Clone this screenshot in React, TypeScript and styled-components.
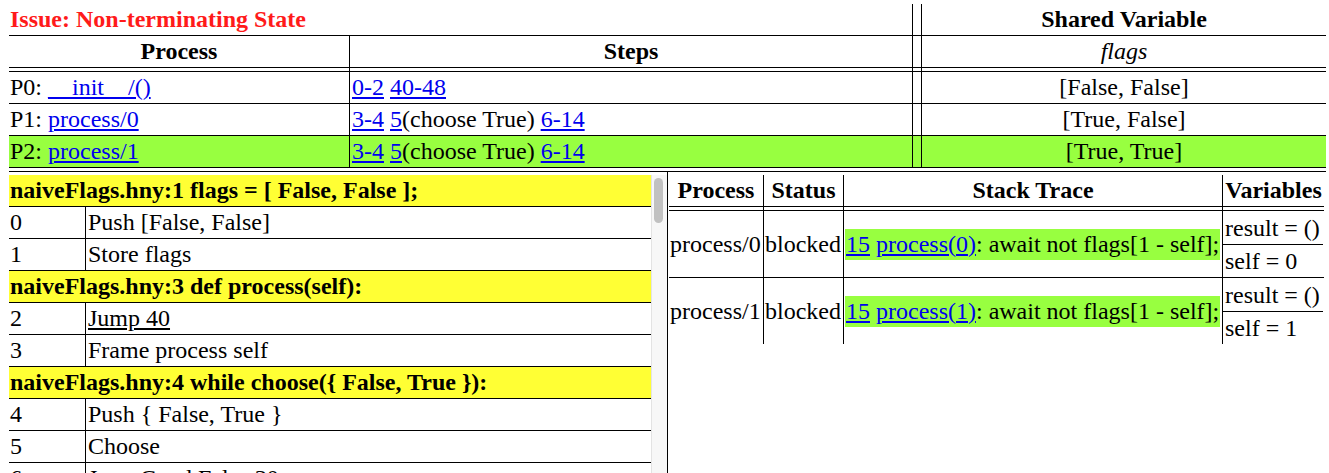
import React from "react";
import styled, { createGlobalStyle } from "styled-components";

const GREEN = "#98ff40";
const YELLOW = "#ffff34";
const LINK = "#0000ee";

const GlobalStyle = createGlobalStyle`
  html, body { margin: 0; padding: 0; overflow: hidden; background: #ffffff; }
  body {
    font-family: "Liberation Serif", "Times New Roman", serif;
    font-size: 24px;
    color: #000000;
  }
`;

const Page = styled.div`
  padding: 4px 0 0 9px;
  width: 1320px;
  height: 469px;
  overflow: hidden;
`;

/* ---------- issue table ---------- */

const IssueTable = styled.div`
  width: 1317px;
`;

const IssueRow = styled.div<{ $h: number; $hl?: boolean }>`
  display: grid;
  grid-template-columns: 340px 563px 9px 405px;
  height: ${(p) => p.$h}px;
  border-bottom: 1px solid #000;
  background: ${(p) => (p.$hl ? GREEN : "transparent")};
`;

const ClosingRule = styled.div`
  height: 3px;
  border-bottom: 1px solid #000;
`;

const Cell = styled.div<{ $rule?: boolean; $center?: boolean; $span?: number; $pl?: number }>`
  grid-column: span ${(p) => p.$span ?? 1};
  display: flex;
  align-items: center;
  justify-content: ${(p) => (p.$center ? "center" : "flex-start")};
  padding: 0 1px 0 ${(p) => p.$pl ?? 1}px;
  border-left: ${(p) => (p.$rule ? "1px solid #000" : "none")};
  white-space: pre;
  overflow: hidden;
  min-width: 0;
`;

const Text = styled.span`
  white-space: pre;
`;

const Heading = styled.span`
  font-weight: bold;
  white-space: pre;
`;

const IssueTitle = styled.span`
  font-weight: bold;
  color: #ff1a1a;
  white-space: pre;
`;

const VarName = styled.span`
  font-style: italic;
`;

const Link = styled.a`
  color: ${LINK};
  text-decoration: underline;
`;

const PlainUnderline = styled.span`
  text-decoration: underline;
`;

/* ---------- lower area ---------- */

const Lower = styled.div`
  display: flex;
  height: 330px;
`;

const CodePane = styled.div`
  display: flex;
  padding-top: 3px;
  width: 658px;
  overflow: hidden;
`;

const CodeList = styled.div`
  width: 642px;
  display: flex;
  flex-direction: column;
`;

const CodeHead = styled.div`
  height: 31px;
  flex: none;
  background: ${YELLOW};
  border-bottom: 1px solid #000;
  display: flex;
  align-items: center;
  padding: 0 1px;
  font-weight: bold;
  white-space: pre;
`;

const CodeRow = styled.div`
  display: grid;
  flex: none;
  grid-template-columns: 76px 566px;
  height: 31px;
  border-bottom: 1px solid #000;
`;

const ScrollTrack = styled.div`
  width: 13px;
  flex: none;
  background: #f7f7f7;
  border-left: 1px solid #e3e3e3;
  padding: 3px 0 0 2px;
`;

const ScrollThumb = styled.div`
  width: 9px;
  height: 45px;
  border-radius: 5px;
  background: #c1c1c1;
`;

const ProcPane = styled.div`
  flex: 1;
  border-left: 1px solid #000;
  padding: 3px 0 0 1px;
`;

const ProcTable = styled.div`
  width: 655px;
`;

const ProcRow = styled.div<{ $h: number; $rule?: boolean }>`
  display: grid;
  grid-template-columns: 94px 80px 379px 102px;
  height: ${(p) => p.$h}px;
  border-bottom: ${(p) => (p.$rule ? "1px solid #000" : "none")};
`;

const TraceBox = styled.div`
  height: 31px;
  line-height: 31px;
  margin-left: 1px;
  padding: 0 1px;
  background: ${GREEN};
  white-space: pre;
`;

const VarCell = styled.div`
  border-left: 1px solid #000;
  display: flex;
  flex-direction: column;
  padding-right: 1px;
`;

const VarLine = styled.div<{ $first?: boolean }>`
  display: flex;
  align-items: center;
  padding: ${(p) => (p.$first ? "2px 0 0 2px" : "0 0 0 2px")};
  height: ${(p) => (p.$first ? 31 : 32)}px;
  border-bottom: ${(p) => (p.$first ? "1px solid #000" : "none")};
  white-space: pre;
`;

type Proc = { name: string; steps: React.ReactNode; value: string; hl?: boolean; link: string };

const procs: Proc[] = [
  {
    name: "P0: ",
    link: "__init__/()",
    steps: (
      <>
        <Link href="#">0-2</Link> <Link href="#">40-48</Link>
      </>
    ),
    value: "[False, False]",
  },
  {
    name: "P1: ",
    link: "process/0",
    steps: (
      <>
        <Link href="#">3-4</Link> <Link href="#">5</Link>(choose True) <Link href="#">6-14</Link>
      </>
    ),
    value: "[True, False]",
  },
  {
    name: "P2: ",
    link: "process/1",
    steps: (
      <>
        <Link href="#">3-4</Link> <Link href="#">5</Link>(choose True) <Link href="#">6-14</Link>
      </>
    ),
    value: "[True, True]",
    hl: true,
  },
];

type CodeItem =
  | { kind: "head"; text: string }
  | { kind: "op"; pc: string; op: React.ReactNode };

const code: CodeItem[] = [
  { kind: "head", text: "naiveFlags.hny:1 flags = [ False, False ];" },
  { kind: "op", pc: "0", op: "Push [False, False]" },
  { kind: "op", pc: "1", op: "Store flags" },
  { kind: "head", text: "naiveFlags.hny:3 def process(self):" },
  { kind: "op", pc: "2", op: <PlainUnderline>Jump 40</PlainUnderline> },
  { kind: "op", pc: "3", op: "Frame process self" },
  { kind: "head", text: "naiveFlags.hny:4 while choose({ False, True }):" },
  { kind: "op", pc: "4", op: "Push { False, True }" },
  { kind: "op", pc: "5", op: "Choose" },
  { kind: "op", pc: "6", op: "JumpCond False 30" },
  { kind: "op", pc: "7", op: "Load flags" },
];

const threads = [
  { name: "process/0", self: "0" },
  { name: "process/1", self: "1" },
];

export default function App() {
  return (
    <>
      <GlobalStyle />
      <Page>
        <IssueTable>
          <IssueRow $h={31}>
            <Cell $span={2}>
              <IssueTitle>Issue: Non-terminating State</IssueTitle>
            </Cell>
            <Cell $rule />
            <Cell $rule $center>
              <Heading>Shared Variable</Heading>
            </Cell>
          </IssueRow>
          <IssueRow $h={31}>
            <Cell $center>
              <Heading>Process</Heading>
            </Cell>
            <Cell $rule $center>
              <Heading>Steps</Heading>
            </Cell>
            <Cell $rule />
            <Cell $rule $center>
              <VarName>flags</VarName>
            </Cell>
          </IssueRow>
          <IssueRow $h={3}>
            <Cell />
            <Cell $rule />
            <Cell $rule />
            <Cell $rule />
          </IssueRow>
          {procs.map((p) => (
            <IssueRow key={p.name} $h={31} $hl={p.hl}>
              <Cell>
                <Text>
                  {p.name}
                  <Link href="#">{p.link}</Link>
                </Text>
              </Cell>
              <Cell $rule $pl={2}>
                <Text>{p.steps}</Text>
              </Cell>
              <Cell $rule />
              <Cell $rule $center>
                <Text>{p.value}</Text>
              </Cell>
            </IssueRow>
          ))}
          <ClosingRule />
        </IssueTable>

        <Lower>
          <CodePane>
            <CodeList>
              {code.map((c, i) =>
                c.kind === "head" ? (
                  <CodeHead key={i}>{c.text}</CodeHead>
                ) : (
                  <CodeRow key={i}>
                    <Cell>
                      <Text>{c.pc}</Text>
                    </Cell>
                    <Cell $rule $pl={2}>
                      <Text>{c.op}</Text>
                    </Cell>
                  </CodeRow>
                )
              )}
            </CodeList>
            <ScrollTrack>
              <ScrollThumb />
            </ScrollTrack>
          </CodePane>

          <ProcPane>
            <ProcTable>
              <ProcRow $h={31} $rule>
                <Cell $center>
                  <Heading>Process</Heading>
                </Cell>
                <Cell $rule $center>
                  <Heading>Status</Heading>
                </Cell>
                <Cell $rule $center>
                  <Heading>Stack Trace</Heading>
                </Cell>
                <Cell $rule $center>
                  <Heading>Variables</Heading>
                </Cell>
              </ProcRow>
              <ProcRow $h={3} $rule>
                <Cell />
                <Cell $rule />
                <Cell $rule />
                <Cell $rule />
              </ProcRow>
              {threads.map((t, i) => (
                <ProcRow key={t.name} $h={66} $rule={i < threads.length - 1}>
                  <Cell>
                    <Text>{t.name}</Text>
                  </Cell>
                  <Cell $rule>
                    <Text>blocked</Text>
                  </Cell>
                  <Cell $rule $pl={0}>
                    <TraceBox>
                      <Link href="#">15</Link> <Link href="#">process({t.self})</Link>: await not
                      flags[1 - self];
                    </TraceBox>
                  </Cell>
                  <VarCell>
                    <VarLine $first>result = ()</VarLine>
                    <VarLine>self = {t.self}</VarLine>
                  </VarCell>
                </ProcRow>
              ))}
            </ProcTable>
          </ProcPane>
        </Lower>
      </Page>
    </>
  );
}
